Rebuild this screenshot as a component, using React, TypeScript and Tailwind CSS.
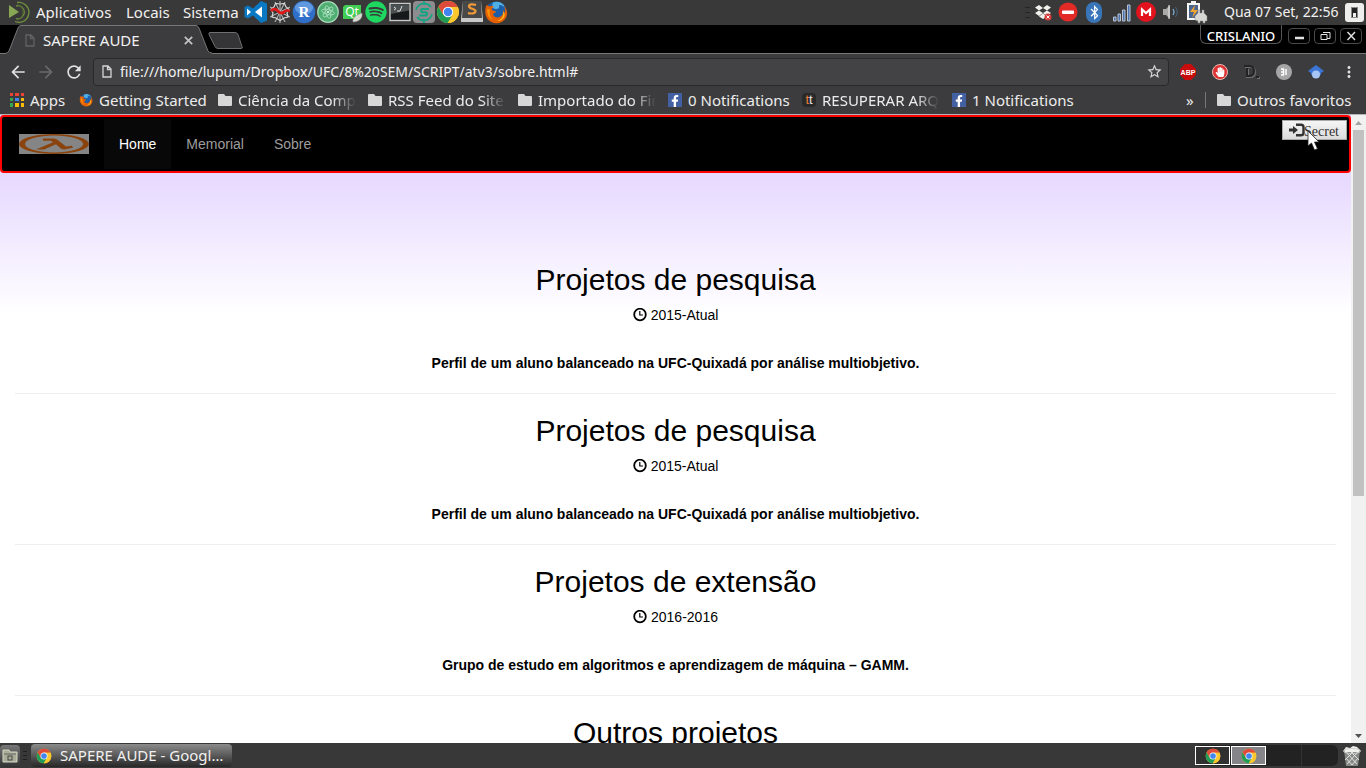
import React from "react";
import { FaBluetoothB, FaFacebookF, FaSpotify, FaHandPaper } from "react-icons/fa";
import { MdMoreVert, MdArrowBack, MdArrowForward, MdRefresh, MdStarBorder } from "react-icons/md";

function ChromeIcon({ size }: { size: number }) {
  return (
    <svg width={size} height={size} viewBox="0 0 48 48" aria-hidden="true">
      <circle cx="24" cy="24" r="22" fill="#fbc72e" />
      <path d="M4.9 13A22 22 0 0 0 23.5 46L33.5 29.5 24 24 14.5 29.5Z" fill="#1f9d57" />
      <path d="M4.9 13 14.5 29.5 24 14H43.6A22 22 0 0 0 4.9 13Z" fill="#df4b3b" />
      <path d="M24 14H43.6A22 22 0 0 1 23.5 46L33 29.5Z" fill="#fbc72e" />
      <circle cx="24" cy="24" r="10.5" fill="#fff" />
      <circle cx="24" cy="24" r="8.5" fill="#4285f0" />
    </svg>
  );
}

function FirefoxIcon({ size }: { size: number }) {
  return (
    <svg width={size} height={size} viewBox="0 0 48 48" aria-hidden="true">
      <circle cx="24" cy="24" r="21" fill="#1c5fa8" />
      <path d="M18 5c8-4 20-1 24 9-5-2-7-5-12-4 2 5-1 8-6 8-4 0-5-3-8-2 0-4 1-8 2-11Z" fill="#4fb0e8" />
      <path d="M5 10c2 0 4 2 5 3 4-2 8-1 10 1-3 1-5 3-4 6 2 2 6 1 8 3-1 3-5 3-6 6 2 5 8 7 13 5 6-3 8-8 7-14 3 3 3 6 3 8 2-6 1-12-1-16 7 7 8 17 3 25-6 9-18 12-28 7C4 39-1 24 5 10Z" fill="#e66000" />
      <path d="M41 28c1 8-7 15-16 14 6-1 10-4 12-8 2-3 2-6 1-10 2 1 3 2 3 4Z" fill="#ffcb20" />
      <path d="M7 17c-2 9 2 19 11 23-7-7-8-14-6-20Z" fill="#ff9500" />
    </svg>
  );
}

function MintMenuIcon() {
  return (
    <svg width="22" height="22" viewBox="0 0 22 22" fill="none" stroke="#6f9240" aria-hidden="true">
      <path d="M1 4 11 11 1 17Z" fill="#87a752" stroke="none" />
      <path d="M9 1.5A10 10 0 1 1 7 20.5M8 5A6.5 6.5 0 1 1 8 17.5" strokeWidth="1.3" />
      <path d="M9 3.5A8 8 0 0 1 9 19" stroke="#4e662f" />
    </svg>
  );
}

function CodeIcon() {
  return (
    <svg width="24" height="24" viewBox="0 0 24 24" aria-hidden="true">
      <path d="M17 1l6 2.5v17L17 23 9 15.5 4 18.5 0.5 17V7L4 5.5l5 3Z" fill="#0b78c4" />
      <path d="M3 8.5v7L7 12ZM18 6.5v11L11 12Z" fill="#fff" />
    </svg>
  );
}

function SpiderIcon() {
  return (
    <svg width="24" height="24" viewBox="0 0 24 24" fill="none" stroke="#d6d6d6" aria-hidden="true">
      <path d="M12 1v22M2 7l20 10M2 17 22 7M7 2l10 20M17 2 7 22" strokeWidth=".9" />
      <path d="M12 4 7.5 3.500 6 7 3 9.500 5 13 4 17 8 18 12 20.500 16 18 20 17 19 13 21 9.500 18 7 16.500 3.500Z" strokeWidth="1.2" />
      <path d="M3 11c3-3 5-2 7 0s4 3 6 1 3-2 6-1" stroke="#df1717" strokeWidth="2.8" />
    </svg>
  );
}

function RIcon() {
  return (
    <svg width="24" height="24" viewBox="0 0 24 24" aria-hidden="true">
      <circle cx="12" cy="12" r="11.3" fill="#2f6fc9" />
      <ellipse cx="12" cy="8" rx="9" ry="6.5" fill="#73a7e8" opacity=".75" />
      <text x="12" y="17" textAnchor="middle" fontSize="15" fontWeight="700" fontFamily="Liberation Serif, serif" fill="#fff">R</text>
    </svg>
  );
}

function AtomIcon() {
  return (
    <svg width="24" height="24" viewBox="0 0 24 24" fill="none" aria-hidden="true">
      <circle cx="12" cy="12" r="10.3" fill="#4fae72" stroke="#a3d9b5" strokeWidth="1.2" />
      <g stroke="#b5e0c3" strokeWidth=".8">
        <ellipse cx="12" cy="12" rx="6.5" ry="2.4" transform="rotate(15 12 12)" />
        <ellipse cx="12" cy="12" rx="6.5" ry="2.4" transform="rotate(75 12 12)" />
        <ellipse cx="12" cy="12" rx="6.5" ry="2.4" transform="rotate(135 12 12)" />
      </g>
      <circle cx="12" cy="12" r="1" fill="#fff" />
    </svg>
  );
}

function QtIcon() {
  return (
    <svg width="24" height="24" viewBox="0 0 24 24" aria-hidden="true">
      <path d="M5 5h16v13l-3 1H3V7Z" fill="#41cd52" />
      <text x="12" y="16" textAnchor="middle" fontSize="12" fontFamily="Noto Sans, sans-serif" fill="#fff">Qt</text>
      <path d="M13 22c-1-5 4-7 9-9 1 5-3 9-9 9Z" fill="#d9dbd5" stroke="#888" strokeWidth=".5" />
    </svg>
  );
}

function TerminalIcon() {
  return (
    <svg width="24" height="24" viewBox="0 0 24 24" aria-hidden="true">
      <rect x="2" y="3.5" width="20" height="17" fill="#15191a" stroke="#c9c9c9" strokeWidth="1.4" />
      <path d="M3 4.5h18v6L3 14Z" fill="#4b5150" />
      <path d="M6 7l2 1.5L6 10M9 11h3M14 6l-2 5" stroke="#e4e4e4" fill="none" />
    </svg>
  );
}

function CoinIcon() {
  return (
    <svg width="24" height="24" viewBox="0 0 24 24" fill="none" aria-hidden="true">
      <rect x="1" y="1" width="22" height="22" rx="4" fill="#8f8c90" />
      <path d="M4 10A8.5 8.5 0 0 1 19 7M20 14A8.5 8.5 0 0 1 5 17" stroke="#0fa583" strokeWidth="1.6" />
      <path d="M17 9H10a1.8 1.8 0 0 0 0 3.2h4a1.8 1.8 0 0 1 0 3.3H7" stroke="#0fa583" strokeWidth="2" />
      <path d="M12 1v4M12 19v4" stroke="#0fa583" strokeWidth="1.5" />
    </svg>
  );
}

function SublimeIcon() {
  return (
    <svg width="24" height="24" viewBox="0 0 24 24" aria-hidden="true">
      <path d="M3 1h18l2 18v3H1v-3Z" fill="#c8c8c8" />
      <path d="M3 1h18l1 17H2Z" fill="#484848" />
      <path d="M16 5c-3-1-7-1-7 1.5S15.5 8.5 15.5 11s-4.5 3-7.5 2" stroke="#f39a38" strokeWidth="2.2" fill="none" />
    </svg>
  );
}

const launchers: { name: string; icon: React.ReactNode }[] = [
  { name: "Editor", icon: <CodeIcon /> },
  { name: "Spyder", icon: <SpiderIcon /> },
  { name: "RStudio", icon: <RIcon /> },
  { name: "Atom", icon: <AtomIcon /> },
  { name: "Qt Creator", icon: <QtIcon /> },
  { name: "Spotify", icon: <FaSpotify size={22} color="#1ed760" /> },
  { name: "Terminal", icon: <TerminalIcon /> },
  { name: "Stock", icon: <CoinIcon /> },
  { name: "Chrome", icon: <ChromeIcon size={24} /> },
  { name: "Sublime", icon: <SublimeIcon /> },
  { name: "Firefox", icon: <FirefoxIcon size={24} /> },
];

function SystemPanel() {
  return (
    <header className="flex h-[25px] shrink-0 items-center bg-[#3a393a] pb-px pl-2 text-[15px] leading-6 text-[#f2f1ef]">
      <MintMenuIcon />
      <nav className="ml-1.5 flex items-center">
        <button className="w-[90px] text-left">Aplicativos</button>
        <button className="w-[57px] text-left">Locais</button>
        <button className="w-[61px] text-left">Sistema</button>
      </nav>
      <div className="flex items-center">
        {launchers.map((l) => (
          <button key={l.name} aria-label={l.name} className="flex size-6 items-center justify-center">
            {l.icon}
          </button>
        ))}
      </div>
      <div className="ml-auto flex items-center">
        <div className="mr-1 flex w-[5px] flex-col gap-1">
          <i className="h-px bg-[#242424]" />
          <i className="h-px bg-[#242424]" />
          <i className="h-px bg-[#242424]" />
        </div>
        <svg width="18" height="18" viewBox="0 0 18 18" aria-hidden="true">
          <path d="M1 4.5 5 2l4 3-4 2.5ZM17 4.5 13 2 9 5l4 2.5ZM1 10l4-2.5L9 10l-4 3ZM17 10l-4-2.5L9 10l4 3ZM5 13.5l4-3 4 3-4 2.5Z" fill="#f1f1ee" />
          <circle cx="14" cy="14" r="3.5" fill="#dc3b3b" />
          <path d="m12.5 12.5 3 3m0-3-3 3" stroke="#fff" />
        </svg>
        <svg className="ml-1.5" width="20" height="20" viewBox="0 0 20 20" aria-hidden="true">
          <circle cx="10" cy="10" r="9.5" fill="#e22b27" />
          <rect x="4" y="8.5" width="12" height="3.5" rx="1" fill="#fff" />
        </svg>
        <span className="ml-2 flex h-[21px] w-4 items-center justify-center rounded-full bg-[#3976b9] text-white">
          <FaBluetoothB size={15} />
        </span>
        <svg className="ml-2.5" width="20" height="20" viewBox="0 0 20 20" fill="#4a73b0" stroke="#b9c3d0" aria-hidden="true">
          <path d="M1.5 15h2.5v4H1.5ZM6 12h2.5v7H6ZM10.5 8H13v11h-2.5ZM15.5 3H18v16h-2.5Z" />
        </svg>
        <svg className="ml-1" width="20" height="20" viewBox="0 0 20 20" aria-hidden="true">
          <circle cx="10" cy="10" r="10" fill="#e3131d" />
          <path d="M6 14V7.5L10 11l4-3.5V14" fill="none" stroke="#fff" strokeWidth="2.2" />
        </svg>
        <svg className="ml-1" width="20" height="20" viewBox="0 0 20 20" fill="none" aria-hidden="true">
          <path d="M3 7h3l4-4v14l-4-4H3Z" fill="#a9aaa8" />
          <path d="M9 3v14" stroke="#e8e8e8" />
          <path d="M13 7q2 3 0 6" stroke="#78a7cc" strokeWidth="1.3" />
          <path d="M15.5 5q3.5 5 0 10" stroke="#486882" />
        </svg>
        <svg className="ml-1.5" width="22" height="24" viewBox="0 0 22 24" aria-hidden="true">
          <path d="M5 1h5v2h4v17H1V3h4Z" fill="#f5f5f3" />
          <rect x="3" y="5" width="9" height="13" fill="#49648f" />
          <path d="M9 5 4 12h4l-2 6 6-8H8Z" fill="#f0a730" />
          <path d="M12 13v-3h2v3h2v-3h2v3l3 3v5h-2v2h-2v-2h-3v2h-2v-2l-3-1v-4Z" fill="#d7d8d4" stroke="#888" strokeWidth=".5" />
        </svg>
        <time className="ml-4 w-[121px] text-sm leading-6 whitespace-nowrap">Qua 07 Set, 22:56</time>
        <svg className="mr-0.5" width="19" height="19" viewBox="0 0 19 19" aria-hidden="true">
          <rect width="19" height="19" rx="3" fill="#eeeeec" />
          <rect x="6.5" y="4.5" width="6" height="10" fill="#222" stroke="#888" />
          <rect x="8" y="10" width="3" height="4" fill="#eee" />
        </svg>
      </div>
    </header>
  );
}

function PageIcon({ color }: { color: string }) {
  return (
    <svg width="10" height="13" viewBox="0 0 10 13" fill="none" stroke={color} strokeWidth="1.3" aria-hidden="true">
      <path d="M1 1h5l3 3v8H1ZM5.5 1v3.5H9" />
    </svg>
  );
}

const windowButtons = [
  { name: "Minimizar", d: "M6 11h9", w: 2.5 },
  { name: "Restaurar", d: "M8 5.5h7v6h-3M6 7.5h6v5H6Z", w: 1 },
  { name: "Fechar", d: "m6.5 5 7.5 8m0-8-7.5 8", w: 1.4 },
];

function TabStrip() {
  return (
    <div className="flex h-7 shrink-0 items-start bg-black pl-1.5">
      <div className="relative h-[29px] w-[206px] shrink-0">
        <svg className="absolute inset-0" width="206" height="29" viewBox="0 0 206 29" aria-hidden="true">
          <path d="M0 29v-1q2 0 3-2L12 3q1-2.5 3-2.5h175q2 0 3 2.5l9 23q1 2 4 2v1Z" fill="#3c3c3e" />
          <path d="M0 28q2 0 3-2L12 3q1-2.5 3-2.5h175q2 0 3 2.5l9 23q1 2 4 2" fill="none" stroke="#777" />
        </svg>
        <div className="relative flex h-[30px] items-center pl-[19px] text-[15px] text-[#f2f2f2]">
          <PageIcon color="#626265" />
          <span className="ml-2 grow whitespace-nowrap">SAPERE AUDE</span>
          <button aria-label="Fechar guia" className="mr-[18px] flex size-3 items-center justify-center">
            <svg width="9" height="9" viewBox="0 0 9 9" stroke="#c4c4c4" strokeWidth="1.7">
              <path d="m.8.8 7.4 7.4M8.2.8.8 8.2" />
            </svg>
          </button>
        </div>
      </div>
      <button aria-label="Nova guia" className="mt-[7px] -ml-1">
        <svg width="35" height="18" viewBox="0 0 35 18">
          <path d="M2 .5h25q2 0 3 2l4 12q1 2-1 2H10q-2 0-3-2L1 2.5Q.5.5 2 .5Z" fill="#353537" stroke="#6f6f71" />
        </svg>
      </button>
      <div className="ml-auto flex items-start gap-1 pr-1 text-white">
        <span className="mr-0.5 flex h-[19px] w-[82px] items-start justify-center rounded-b-md border border-t-0 border-[#555] text-[13px] leading-[22px] font-medium">CRISLANIO</span>
        {windowButtons.map((b) => (
          <button key={b.name} aria-label={b.name} className="mt-[3px] h-4 w-[22px] rounded-sm border border-[#4a4a4a]">
            <svg className="block" width="20" height="14" viewBox="0 2 20 14" fill="none" stroke="#e2e2e2" strokeWidth={b.w}>
              <path d={b.d} />
            </svg>
          </button>
        ))}
      </div>
    </div>
  );
}

function Toolbar() {
  return (
    <div className="flex h-[34px] shrink-0 items-center border-t border-[#777] bg-[#3c3c3e] pt-0.5">
      <div className="flex w-[93px] shrink-0 items-center gap-2 pl-2 text-[#e0e0e0]">
        <button aria-label="Voltar"><MdArrowBack size={20} /></button>
        <button aria-label="Avançar" className="text-[#6a6a6d]"><MdArrowForward size={20} /></button>
        <button aria-label="Recarregar"><MdRefresh size={20} /></button>
      </div>
      <div className="flex h-7 grow items-center rounded-sm border border-[#29292a] bg-[#434345] pr-[5px] pl-2">
        <PageIcon color="#d4d4d4" />
        <input
          aria-label="Endereço"
          className="ml-2 min-w-0 grow bg-transparent text-sm text-[#f1f1f1] outline-none"
          defaultValue="file:///home/lupum/Dropbox/UFC/8%20SEM/SCRIPT/atv3/sobre.html#"
        />
        <button aria-label="Favoritar" className="text-[#d8d8d8]"><MdStarBorder size={17} /></button>
      </div>
      <div className="flex w-[197px] shrink-0 items-center gap-4 pl-[11px]">
        <svg width="16" height="16" viewBox="0 0 16 16" aria-hidden="true">
          <path d="M5 0h6l5 5v6l-5 5H5l-5-5V5Z" fill="#c70d0c" />
          <text x="8" y="11" textAnchor="middle" fontSize="7" fontWeight="700" fontFamily="Liberation Sans, sans-serif" fill="#fff">ABP</text>
        </svg>
        <span className="flex size-4 items-center justify-center rounded-full border border-[#e8bbb5] bg-[#de3131] text-white">
          <FaHandPaper size={10} />
        </span>
        <svg width="16" height="16" viewBox="0 0 16 16" fill="none" aria-hidden="true">
          <path d="M1 3h5q5 0 5 5t-5 5H2M4 5v8M13 14h3" stroke="#707072" strokeWidth="2" />
          <path d="M0 2h5q5 0 5 5t-5 5H2M3 4v8M12 13h3" stroke="#232324" strokeWidth="2" />
        </svg>
        <svg width="16" height="16" viewBox="0 0 16 16" aria-hidden="true">
          <circle cx="8" cy="8" r="8" fill="#a6a6a6" />
          <path d="M5 5h2.500v6H5M10 5v6M5 8h2" fill="none" stroke="#fff" strokeWidth="1.5" />
        </svg>
        <svg width="16" height="16" viewBox="0 0 16 16" aria-hidden="true">
          <path d="M8 1l8 6-3 2v2H3V9L0 7Z" fill="#3c75d6" />
          <circle cx="8" cy="10.5" r="4" fill="#a7c5f5" />
        </svg>
        <button aria-label="Menu" className="text-[#e0e0e0]"><MdMoreVert size={18} /></button>
      </div>
    </div>
  );
}

function FolderIcon() {
  return (
    <svg width="14" height="14" viewBox="0 0 14 14" fill="#d7d7d7" aria-hidden="true">
      <path d="M1 1h5l1.5 2H13q1 0 1 1v8q0 1-1 1H1q-1 0-1-1V2q0-1 1-1Z" />
    </svg>
  );
}

function FacebookIcon() {
  return (
    <span className="flex size-3.5 items-end justify-center bg-[#4360a2] text-white">
      <FaFacebookF size={12} />
    </span>
  );
}

function AppsIcon() {
  const colors = ["#ea4335", "#ea4335", "#ea4335", "#34a853", "#4285f4", "#fbbc05", "#34a853", "#fbbc05", "#fbbc05"];
  return (
    <span className="grid size-3.5 grid-cols-3 gap-0.5">
      {colors.map((c, i) => (
        <i key={i} style={{ backgroundColor: c }} />
      ))}
    </span>
  );
}

const fade = "mr-3 overflow-hidden [mask-image:linear-gradient(to_right,black_80%,transparent)]";
const bookmarks = [
  { label: "Apps", icon: <AppsIcon />, width: "w-[69px]", text: "" },
  { label: "Getting Started", icon: <FirefoxIcon size={14} />, width: "w-[139px]", text: "" },
  { label: "Ciência da Compu", icon: <FolderIcon />, width: "w-[150px]", text: fade },
  { label: "RSS Feed do Site I", icon: <FolderIcon />, width: "w-[150px]", text: fade },
  { label: "Importado do Fir", icon: <FolderIcon />, width: "w-[150px]", text: fade },
  { label: "0 Notifications", icon: <FacebookIcon />, width: "w-[134px]", text: "" },
  {
    label: "RESUPERAR ARQ",
    icon: (
      <span className="flex size-3.5 items-center justify-center rounded-sm bg-[#29292a] font-[Liberation_Sans] text-[13px] leading-none text-[#ef7f31]">
        t<span className="text-[#e4e4e4]">t</span>
      </span>
    ),
    width: "w-[150px]",
    text: fade,
  },
  { label: "1 Notifications", icon: <FacebookIcon />, width: "w-[150px]", text: "" },
];

function BookmarksBar() {
  return (
    <nav className="flex h-7 shrink-0 items-center border-b border-[#b5b5b8] bg-[#3c3c3e] pb-0.5 pl-2.5 text-[15px] leading-6 text-[#ececec]">
      {bookmarks.map((b) => (
        <a key={b.label} href="#" className={`flex shrink-0 items-center gap-1.5 ${b.width}`}>
          <span className="shrink-0">{b.icon}</span>
          <span className={`whitespace-nowrap ${b.text}`}>{b.label}</span>
        </a>
      ))}
      <button className="ml-auto w-[19px] text-left" aria-label="Mais favoritos">»</button>
      <div className="h-4 w-3 border-l border-[#77777a]" />
      <a href="#" className="flex w-[149px] items-center gap-1.5 whitespace-nowrap">
        <FolderIcon />
        Outros favoritos
      </a>
    </nav>
  );
}

function LambdaLogo() {
  return (
    <svg width="70" height="20" viewBox="0 0 70 20" fill="none" role="img" aria-label="Lambda">
      <rect width="70" height="20" fill="#858585" />
      <path d="M0 10A35 10 0 0 1 70 10 35 10 0 0 1 0 10ZM6 10A29 8.5 0 0 0 64 10 29 8.5 0 0 0 6 10Z" fill="#8a430c" fillRule="evenodd" />
      <path d="M24 4.500h11l3 1 9 7 6-.8 1 2-9 1.800-3-.8-5-4.500L25 15.500h-8L34 8.300l-2-1.600h-8Z" fill="#8a430c" />
    </svg>
  );
}

function ClockIcon() {
  return (
    <svg width="14" height="14" viewBox="0 0 14 14" fill="none" stroke="#000" aria-hidden="true">
      <circle cx="7" cy="6.5" r="5.8" strokeWidth="1.8" />
      <path d="M6.8 3v4H10" strokeWidth="1.2" />
    </svg>
  );
}

const projects = [
  { title: "Projetos de pesquisa", period: "2015-Atual", text: "Perfil de um aluno balanceado na UFC-Quixadá por análise multiobjetivo." },
  { title: "Projetos de pesquisa", period: "2015-Atual", text: "Perfil de um aluno balanceado na UFC-Quixadá por análise multiobjetivo." },
  { title: "Projetos de extensão", period: "2016-2016", text: "Grupo de estudo em algoritmos e aprendizagem de máquina – GAMM." },
];

function WebPage() {
  return (
    <div className="min-w-0 grow overflow-hidden bg-white bg-[linear-gradient(#dcc8ff,#fff_200px)] font-['Liberation_Sans',Arial,sans-serif] text-sm text-black">
      <nav className="relative flex items-center rounded border-2 border-[#f00] bg-black p-0.5 text-[#9d9d9d]">
        <a href="#" className="px-[15px]"><LambdaLogo /></a>
        <a href="#" className="flex h-[50px] items-center bg-[#080808] px-[15px] text-white">Home</a>
        <a href="#" className="px-[15px]">Memorial</a>
        <a href="#" className="px-[15px]">Sobre</a>
        <button className="mt-px ml-auto flex h-5 w-[65px] items-center self-start border border-[#a9a9a9] bg-linear-to-b from-[#f5f5f5] to-[#dcdcdc] pl-1.5 font-['Liberation_Serif',serif] text-sm text-[#333]">
          <svg className="shrink-0" width="17" height="14" viewBox="0 0 17 14" aria-hidden="true">
            <path d="M0 5.5h4V3l5 4-5 4V8.500H0Z" fill="#333" />
            <path d="M7 1.7h5q2.500 0 2.500 2.500v5.600q0 2.500-2.500 2.500H7" fill="none" stroke="#333" strokeWidth="2.4" />
          </svg>
          <span className="-ml-0.5 pt-1">Secret</span>
        </button>
        <svg className="absolute top-[14px] right-[28px]" width="14" height="20" viewBox="0 0 14 20" aria-hidden="true">
          <path d="M1 0v15l3.5-3 3 7 3-1.3-3-6.7H12Z" fill="#fff" stroke="#222" strokeWidth=".8" />
        </svg>
      </nav>
      <main className="px-[15px] pt-[90px] text-center">
        {projects.map((p, i) => (
          <section key={i} className="mb-5 border-b border-[#eee] pb-5">
            <h2 className="text-[30px] leading-[33px]">{p.title}</h2>
            <p className="mt-[9px] flex items-center justify-center gap-1 leading-5">
              <ClockIcon />
              {p.period}
            </p>
            <p className="mt-7 leading-5 font-bold">{p.text}</p>
          </section>
        ))}
        <section>
          <h2 className="text-[30px] leading-[33px]">Outros projetos</h2>
        </section>
      </main>
    </div>
  );
}

function Scrollbar() {
  return (
    <div className="flex w-[15px] shrink-0 flex-col items-center bg-[#f1f1f1]" aria-hidden="true">
      <svg className="shrink-0" width="15" height="15" viewBox="0 0 15 15"><path d="M4 10 7.5 6 11 10Z" fill="#a3a3a3" /></svg>
      <div className="w-[11px] grow-[366] bg-[#c1c1c1]" />
      <div className="grow-[232]" />
      <svg className="shrink-0" width="15" height="15" viewBox="0 0 15 15"><path d="M4 6 7.5 10 11 6Z" fill="#505050" /></svg>
    </div>
  );
}

function Taskbar() {
  return (
    <footer className="flex h-[25px] shrink-0 items-center bg-[#383838] text-[15px] text-[#f2f1ef]">
      <button aria-label="Arquivos" className="flex h-[22px] w-5 items-center justify-center rounded bg-linear-to-b from-[#777] to-[#333]">
        <svg width="16" height="14" viewBox="0 0 16 14">
          <path d="M1 1h6l1 2h7v10H1Z" fill="#a9ad97" stroke="#d4d6c4" />
          <path d="M2 5h12" stroke="#666" />
          <rect x="6" y="7" width="4" height="4" fill="none" stroke="#444" />
        </svg>
      </button>
      <div className="ml-[3px] flex w-1 flex-col gap-[3px]">
        <i className="h-px bg-[#1e1e1e]" />
        <i className="h-px bg-[#1e1e1e]" />
        <i className="h-px bg-[#1e1e1e]" />
      </div>
      <button className="ml-1 flex h-[23px] w-[201px] items-center gap-2 rounded bg-linear-to-b from-[#8b8b8b] via-[#5a5a5a] to-[#282828] pl-[5px] whitespace-nowrap">
        <ChromeIcon size={16} />
        SAPERE AUDE - Googl…
      </button>
      <div className="ml-auto flex h-[21px] items-center rounded-md bg-[#222]">
        <button aria-label="Área 1" className="flex h-[19px] w-[35px] items-center justify-center border border-white bg-[#303030]"><ChromeIcon size={16} /></button>
        <button aria-label="Área 2" className="ml-px flex h-[19px] w-[35px] items-center justify-center border border-white bg-[#858589]"><ChromeIcon size={16} /></button>
        <button aria-label="Área 3" className="h-full w-9 border-r border-[#333]" />
        <button aria-label="Área 4" className="h-full w-9" />
      </div>
      <button aria-label="Lixeira" className="mr-1 ml-1">
        <svg width="20" height="22" viewBox="0 0 20 22">
          <path d="M2 5h16l-2 16H4Z" fill="#878986" />
          <path d="M4 7l11 12M8 6l9 9M4 13l6 7M16 7 5 19M12 6l-9 9M16 13l-6 7" stroke="#e0e0de" />
          <path d="M2 5 4 2l4 1 3-2 4 1 3 3-1 2H3Z" fill="#f0f0ee" />
          <ellipse cx="10" cy="6" rx="8.5" ry="2.5" fill="none" stroke="#cecfcb" />
        </svg>
      </button>
    </footer>
  );
}

export default function App() {
  return (
    <div className="flex h-screen flex-col overflow-hidden font-['Noto_Sans',sans-serif]">
      <SystemPanel />
      <TabStrip />
      <Toolbar />
      <BookmarksBar />
      <div className="flex min-h-0 grow">
        <WebPage />
        <Scrollbar />
      </div>
      <Taskbar />
    </div>
  );
}
